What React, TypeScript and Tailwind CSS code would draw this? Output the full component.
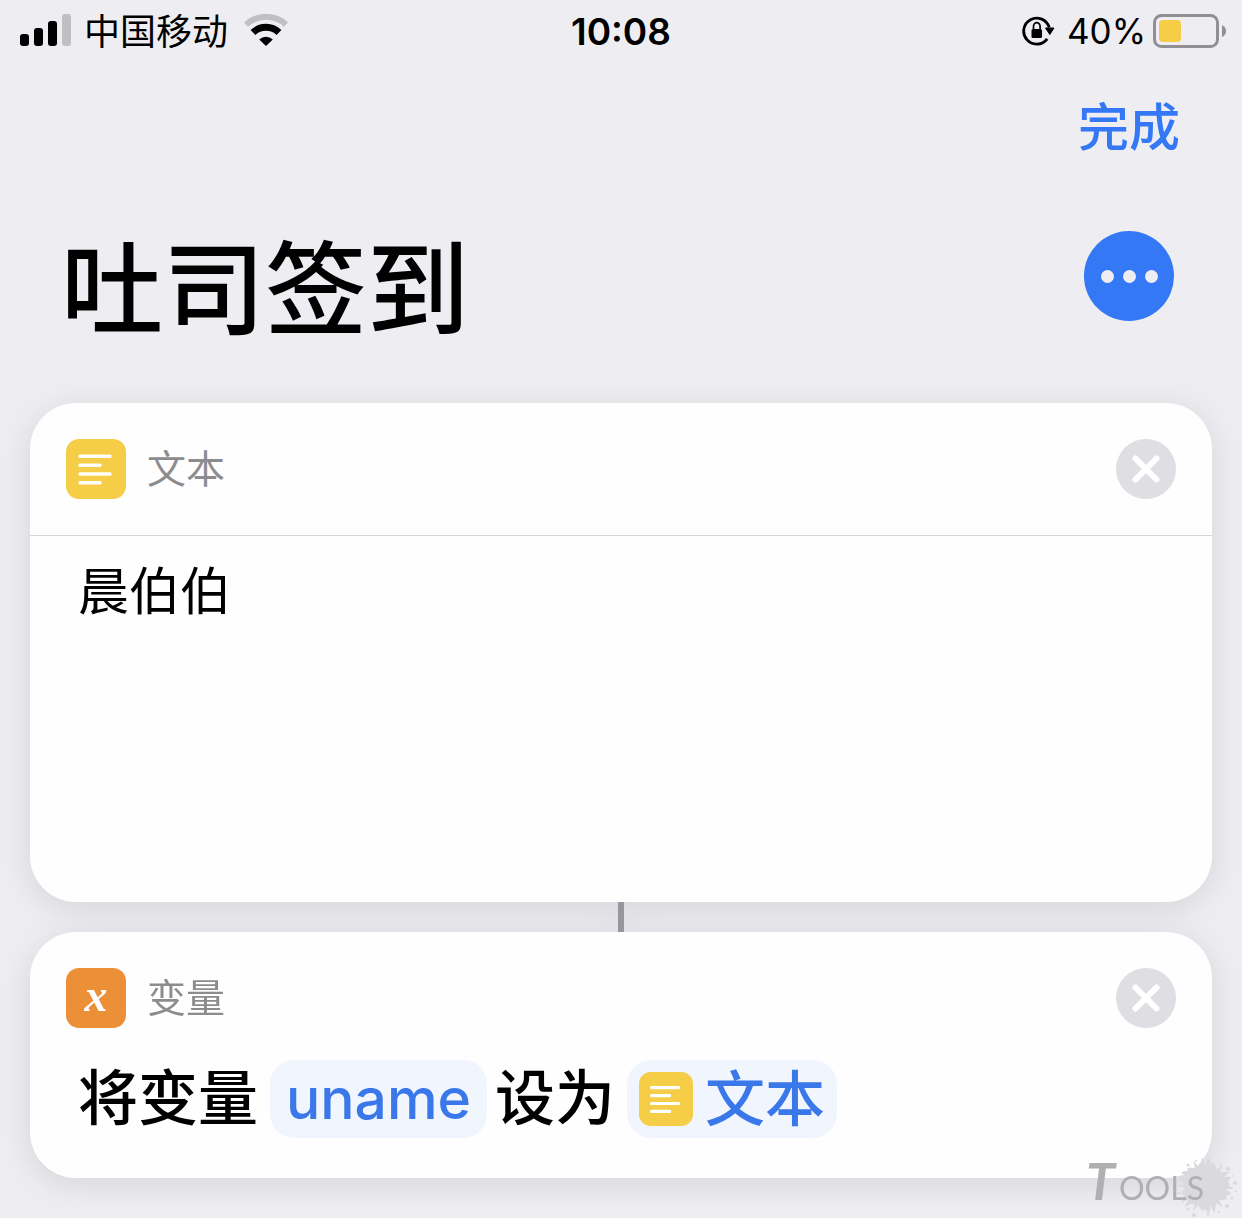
import type { ReactNode } from "react";

const signalBars = [
  { height: 12, fill: "#000000" },
  { height: 18, fill: "#000000" },
  { height: 25, fill: "#000000" },
  { height: 32, fill: "#bfbfc4" },
];

// 墨点的轮廓：半径在固定序列中变化
const splatRadii = [24, 22, 27, 21, 25, 29, 20, 26, 22, 24, 21, 28, 23];

const splatPoints = Array.from({ length: 72 }, (_, i) => {
  const angle = (i / 72) * Math.PI * 2;
  const r = splatRadii[(i * 5) % splatRadii.length];
  return `${(29 + r * Math.cos(angle)).toFixed(1)},${(28 + r * Math.sin(angle)).toFixed(1)}`;
}).join(" ");

const splatDots = [
  [4, 22, 1.5], [7, 15, 1], [12, 7, 1.5], [20, 3, 1], [33, 2, 1.5], [45, 6, 1], [52, 11, 2],
  [57, 18, 1], [59, 25, 2], [60, 33, 1], [56, 40, 1.5], [51, 48, 2], [43, 54, 1], [32, 56, 1.5],
  [18, 57, 2], [12, 51, 1.5], [7, 44, 1], [3, 35, 1.5], [9, 39, 1],
];

function SignalIcon() {
  return (
    <svg width="52" height="34" viewBox="0 0 52 34" aria-hidden="true">
      {signalBars.map((bar, i) => (
        <rect key={bar.height} x={i * 14} y={32 - bar.height} width="9" height={bar.height} rx="3" fill={bar.fill} />
      ))}
    </svg>
  );
}

function WifiIcon() {
  return (
    <svg width="46" height="34" viewBox="0 0 46 34" fill="none" aria-hidden="true">
      <path d="M2 10.5A30 30 0 0 1 42 10.5" stroke="#bfbfc4" strokeWidth="6" />
      <path d="M9 18.5A19 19 0 0 1 35 18.5" stroke="#000" strokeWidth="7" />
      <path d="M22 32L15.2 25.4A10 10 0 0 1 28.8 25.4Z" fill="#000" />
    </svg>
  );
}

function RotationLockIcon() {
  return (
    <svg width="33" height="32" viewBox="0 0 33 32" fill="none" aria-hidden="true">
      <path d="M25.2 23.8A13 13 0 1 1 27.2 12.5" stroke="#000" strokeWidth="2.8" />
      <path d="M23.5 13H32L27.8 19.5Z" fill="#000" stroke="#000" strokeWidth="1" strokeLinejoin="round" />
      <rect x="9.5" y="14" width="10.5" height="9" rx="1.5" fill="#000" />
      <path d="M11.5 14.5V11.5A3.3 3.8 0 0 1 18.1 11.5V14.5" stroke="#000" strokeWidth="1.7" />
    </svg>
  );
}

function BatteryIcon() {
  return (
    <svg width="74" height="34" viewBox="0 0 74 34" fill="none" aria-hidden="true">
      <rect x="2.5" y="1.5" width="63" height="31" rx="7" stroke="#8f8f94" strokeWidth="3" />
      <rect x="7" y="6" width="22" height="22" rx="4" fill="#f5cd46" />
      <path d="M70 11Q74 13 74 17Q74 21 70 23Z" fill="#8f8f94" />
    </svg>
  );
}

function TextIcon({ className }: { className: string }) {
  return (
    <svg viewBox="0 0 60 60" className={className} aria-hidden="true">
      <rect width="60" height="60" rx="13" fill="#f5cd46" />
      <g stroke="#fff" strokeWidth="3.6" strokeLinecap="round">
        <path d="M14 17.3H44M14 26.2H34M14 35H44M14 43.8H34" />
      </g>
    </svg>
  );
}

function VariableIcon() {
  return (
    <span
      className="flex size-[60px] items-center justify-center rounded-[13px] bg-[#ec9038] pb-1 font-['Liberation_Serif',serif] text-[46px] leading-none font-bold text-white italic"
      aria-hidden="true"
    >
      x
    </span>
  );
}

function RemoveButton({ label }: { label: string }) {
  return (
    <button type="button" aria-label={label} className="ml-auto flex size-[60px] items-center justify-center rounded-full bg-[#dfdee3]">
      <svg width="30" height="30" viewBox="0 0 30 30" aria-hidden="true">
        <path d="M4.5 4.5L25.5 25.5M25.5 4.5L4.5 25.5" stroke="#fff" strokeWidth="6" strokeLinecap="round" />
      </svg>
    </button>
  );
}

function CardHeader({ icon, title }: { icon: ReactNode; title: string }) {
  return (
    <div className="flex items-center gap-[21px] px-9 pt-9">
      {icon}
      <h2 className="text-[39px] leading-[60px] text-[#8c8c8e]">{title}</h2>
      <RemoveButton label={`删除${title}`} />
    </div>
  );
}

function Watermark() {
  return (
    <div className="pointer-events-none absolute right-1 bottom-0 flex h-[60px] w-[152px] items-end">
      <svg width="62" height="60" viewBox="0 0 62 60" fill="#dadadd" className="absolute right-0 bottom-0" aria-hidden="true">
        <polygon points={splatPoints} />
        {splatDots.map(([x, y, r]) => (
          <circle key={`${x}-${y}`} cx={x} cy={y} r={r} />
        ))}
      </svg>
      <span className="relative flex items-baseline gap-1 pb-3 font-['Lato',sans-serif] text-[#b0b0b3]">
        <span className="text-[52px] leading-9 font-bold italic">T</span>
        <span className="text-[32px] leading-9 uppercase">ools</span>
      </span>
    </div>
  );
}

export default function App() {
  return (
    <div className="relative min-h-screen bg-[#eeedf2] pb-10 font-['Inter','Noto_Sans_CJK_SC',sans-serif] text-black">
      {/* 状态栏 */}
      <div className="grid h-[62px] grid-cols-3 items-center px-4">
        <div className="flex items-center pl-1">
          <SignalIcon />
          <span className="ml-3 pt-0.5 text-4xl">中国移动</span>
          <span className="ml-4">
            <WifiIcon />
          </span>
        </div>
        <time className="pt-0.5 text-center text-[37px] font-semibold">10:08</time>
        <div className="flex items-center justify-end">
          <RotationLockIcon />
          <span className="mr-1.5 ml-3 text-[35px]">40%</span>
          <BatteryIcon />
        </div>
      </div>

      <div className="flex justify-end px-[62px] pt-[30px]">
        <button type="button" className="text-[51px] leading-[72px] font-medium text-[#3478f6]">
          完成
        </button>
      </div>

      {/* 标题 */}
      <header className="flex items-center justify-between pt-11 pr-[68px] pl-[61px]">
        <h1 className="text-[102px] leading-[164px] font-medium">吐司签到</h1>
        <button type="button" aria-label="更多" className="mb-7 flex size-[90px] items-center justify-center gap-[9px] rounded-full bg-[#3478f6]">
          <span className="size-[13px] rounded-full bg-[#eeedf2]" />
          <span className="size-[13px] rounded-full bg-[#eeedf2]" />
          <span className="size-[13px] rounded-full bg-[#eeedf2]" />
        </button>
      </header>

      <main className="px-[30px] pt-[31px] drop-shadow-[0_6px_16px_rgba(0,0,0,0.1)]">
        <section className="rounded-[46px] bg-[#fefefe]">
          <div className="border-b border-[#d4d4d6] pb-9">
            <CardHeader icon={<TextIcon className="size-[60px]" />} title="文本" />
          </div>
          <textarea
            aria-label="文本"
            defaultValue="晨伯伯"
            className="block h-[366px] w-full resize-none bg-transparent px-12 pt-[18px] text-[51px] leading-[76px] outline-none"
          />
        </section>

        <div className="mx-auto h-[30px] w-1.5 bg-[#96969e]" />

        <section className="rounded-[46px] bg-[#fefefe] pb-10">
          <CardHeader icon={<VariableIcon />} title="变量" />
          <div className="flex flex-wrap items-center px-12 pt-8 text-[60px] leading-[74px] font-medium">
            <span className="pb-0.5">将变量</span>
            <button type="button" className="mr-2 ml-3 rounded-3xl bg-[#f0f5fe] px-4 py-0.5 text-[57px] text-[#3a78ea]">
              uname
            </button>
            <span className="pb-0.5">设为</span>
            <button type="button" className="ml-3 flex items-center gap-3 rounded-3xl bg-[#f0f5fe] px-3 py-0.5 text-[#3a78ea]">
              <TextIcon className="size-[54px]" />
              文本
            </button>
          </div>
        </section>
      </main>

      <Watermark />
    </div>
  );
}
